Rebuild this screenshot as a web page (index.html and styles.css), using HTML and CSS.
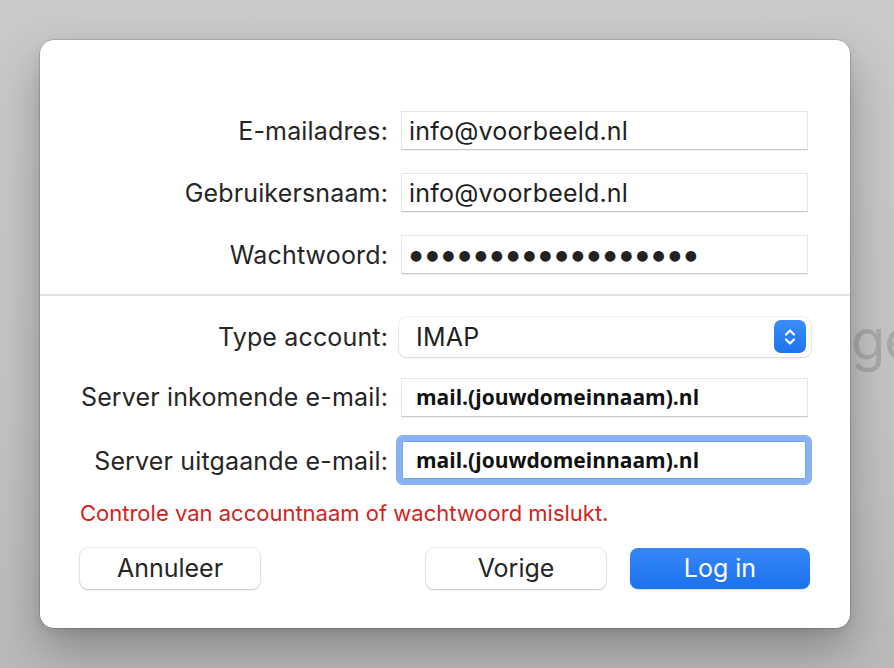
FILE: index.html
```html
<!DOCTYPE html>
<html lang="nl">
<head>
<meta charset="utf-8">
<title>Account toevoegen</title>
<link rel="stylesheet" href="styles.css">
</head>
<body>
<div class="backdrop"><span class="backdrop-text">ge</span></div>
<div class="dialog">
  <div class="form">
    <label class="label">E-mailadres:</label>
    <div class="field"><span class="value">info@voorbeeld.nl</span></div>
    <label class="label">Gebruikersnaam:</label>
    <div class="field"><span class="value">info@voorbeeld.nl</span></div>
    <label class="label">Wachtwoord:</label>
    <div class="field"><span class="dots">●●●●●●●●●●●●●●●●●●</span></div>
  </div>
  <div class="divider"></div>
  <div class="form form-lower">
    <label class="label">Type account:</label>
    <div class="popup">
      <span class="popup-value">IMAP</span>
      <span class="stepper">
        <svg width="14" height="22" viewBox="0 0 14 22"><path d="M3 8.5 L7 4.5 L11 8.5" fill="none" stroke="#fff" stroke-width="2.2" stroke-linecap="round" stroke-linejoin="round"/><path d="M3 13.5 L7 17.5 L11 13.5" fill="none" stroke="#fff" stroke-width="2.2" stroke-linecap="round" stroke-linejoin="round"/></svg>
      </span>
    </div>
    <label class="label">Server inkomende e-mail:</label>
    <div class="field"><span class="value bold">mail.(jouwdomeinnaam).nl</span></div>
    <label class="label label-focused">Server uitgaande e-mail:</label>
    <div class="focus-ring"><div class="field field-focused"><span class="value bold">mail.(jouwdomeinnaam).nl</span></div></div>
  </div>
  <p class="error">Controle van accountnaam of wachtwoord mislukt.</p>
  <div class="buttons">
    <button class="btn">Annuleer</button>
    <div class="spacer"></div>
    <button class="btn">Vorige</button>
    <button class="btn btn-primary">Log in</button>
  </div>
</div>
</body>
</html>
```
FILE: styles.css
```css
html, body {
  margin: 0;
  padding: 0;
}
body {
  width: 894px;
  height: 668px;
  overflow: hidden;
  position: relative;
  background: linear-gradient(to bottom, #cacaca 0%, #c4c4c4 60%, #bababa 100%);
  font-family: "Inter", "Liberation Sans", sans-serif;
  color: #262626;
  padding: 40px 0 0 40px;
  box-sizing: border-box;
}
.backdrop {
  position: absolute;
  left: 851px;
  top: 300px;
  width: 43px;
  height: 80px;
  overflow: hidden;
}
.backdrop-text {
  display: block;
  white-space: nowrap;
  font-size: 56px;
  line-height: 80px;
  color: #a9a9a9;
  letter-spacing: -1px;
}
.dialog {
  position: relative;
  width: 810px;
  height: 588px;
  background: #ffffff;
  border-radius: 14px;
  box-shadow: 0 0 0 0.5px rgba(0,0,0,0.25), 0 22px 48px rgba(0,0,0,0.28), 0 4px 10px rgba(0,0,0,0.08);
  box-sizing: border-box;
  padding: 71px 42px 0 40px;
}
.form {
  display: grid;
  grid-template-columns: 308px 407px;
  column-gap: 13px;
  row-gap: 23px;
  align-items: center;
}
.label {
  text-align: right;
  font-size: 25px;
  letter-spacing: 0.15px;
  white-space: nowrap;
  color: #262626;
}
.label-focused {
  padding-top: 8px;
}
.field {
  height: 39px;
  box-sizing: border-box;
  background: #fff;
  border: 1px solid #e6e6e6;
  border-bottom-color: #c9c9c9;
  box-shadow: 0 1px 0 rgba(0,0,0,0.05);
  display: flex;
  align-items: center;
  padding-left: 7px;
}
.value {
  font-size: 25px;
  letter-spacing: 0.2px;
  color: #1f1f1f;
}
.value.bold {
  font-family: "Open Sans", "Liberation Sans", sans-serif;
  font-weight: 700;
  font-size: 21px;
  letter-spacing: 0;
  padding-left: 7px;
  color: #111;
}
.dots {
  font-family: "DejaVu Sans", sans-serif;
  font-size: 14px;
  letter-spacing: 3.95px;
  color: #222;
  padding-left: 1px;
}
.divider {
  height: 1.5px;
  background: #e2e2e2;
  margin: 20px -42px 21px -40px;
}
.form-lower {
  row-gap: 21px;
}
.popup {
  height: 40px;
  margin-left: -2px;
  margin-right: -3px;
  box-sizing: border-box;
  border-radius: 8px;
  background: #fff;
  box-shadow: 0 0 0 1px rgba(0,0,0,0.06), 0 1px 2px rgba(0,0,0,0.12);
  display: flex;
  align-items: center;
  justify-content: space-between;
  padding: 0 5px 0 17px;
}
.popup-value {
  font-size: 25px;
  letter-spacing: 0.2px;
  color: #1f1f1f;
}
.stepper {
  width: 32px;
  height: 33px;
  border-radius: 7px;
  background: linear-gradient(to bottom, #3a8cf7, #1d74ee);
  display: flex;
  align-items: center;
  justify-content: center;
}
.focus-ring {
  margin: -3px -4px -8px -5px;
  padding: 6px;
  border-radius: 7px;
  background: #88b2f1;
}
.field-focused {
  border: 1px solid #7aa8ec;
  border-radius: 2px;
  height: 38px;
  padding-left: 6px;
  box-shadow: none;
}
.error {
  margin: 23px 0 0 0;
  font-size: 22px;
  letter-spacing: 0;
  color: #d2241c;
}
.buttons {
  display: flex;
  align-items: center;
  gap: 24px;
  margin-top: 22px;
  margin-right: -2px;
}
.spacer {
  flex: 1;
}
.btn {
  width: 180px;
  height: 41px;
  border: none;
  border-radius: 8px;
  background: #fff;
  box-shadow: 0 0 0 1px rgba(0,0,0,0.07), 0 1px 2px rgba(0,0,0,0.18);
  font-family: "Inter", "Liberation Sans", sans-serif;
  font-size: 25px;
  letter-spacing: 0;
  color: #262626;
  padding: 0;
}
.btn-primary {
  background: linear-gradient(to bottom, #3787f7, #1b70ec);
  color: #fff;
  box-shadow: 0 1px 2px rgba(0,0,0,0.15);
}
```
